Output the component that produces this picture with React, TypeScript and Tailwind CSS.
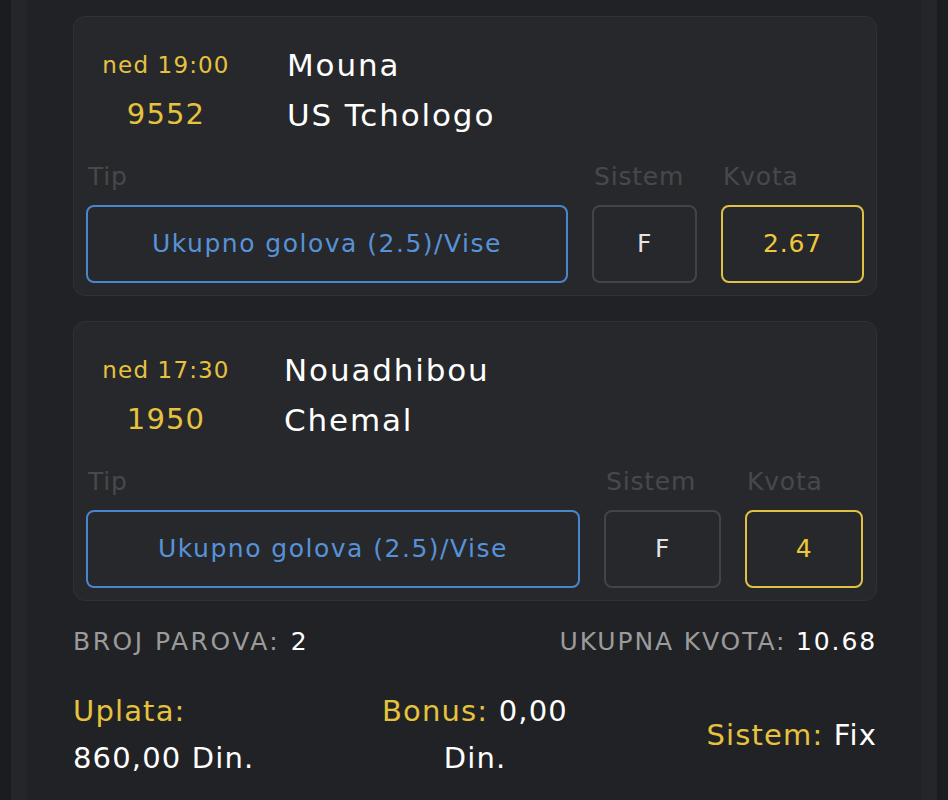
const matches = [
  {
    time: "ned 19:00",
    code: "9552",
    home: "Mouna",
    away: "US Tchologo",
    tip: "Ukupno golova (2.5)/Vise",
    sistem: "F",
    kvota: "2.67",
    cols: "grid-cols-[482px_105px_143px]",
    teamsGap: "ml-[41px]",
  },
  {
    time: "ned 17:30",
    code: "1950",
    home: "Nouadhibou",
    away: "Chemal",
    tip: "Ukupno golova (2.5)/Vise",
    sistem: "F",
    kvota: "4",
    cols: "grid-cols-[494px_117px_118px]",
    teamsGap: "ml-[38px]",
  },
]

function MatchCard({ m }: { m: (typeof matches)[number] }) {
  return (
    <div className="rounded-[12px] border border-[#303134] bg-[#27282b] pb-[12px] pl-[12px] pr-[12px] pt-[23px]">
      <div className="flex">
        <div className="flex w-[160px] flex-col items-center">
          <div className="flex h-[50px] items-center text-[23px] tracking-[0.05em] text-[#e6c23e]">
            {m.time}
          </div>
          <div className="flex h-[50px] items-center text-[29px] tracking-[0.04em] text-[#e6c23e]">
            {m.code}
          </div>
        </div>
        <div className={`${m.teamsGap} flex flex-col text-[31px] tracking-[0.06em] text-white`}>
          <div className="flex h-[50px] items-center">{m.home}</div>
          <div className="flex h-[50px] items-center">{m.away}</div>
        </div>
      </div>

      <div className={`mt-[20px] grid ${m.cols} gap-x-[24px] tracking-[0.05em]`}>
        <div className="h-[34px] pl-[2px] text-[25px] leading-[34px] text-[#47484b]">Tip</div>
        <div className="h-[34px] pl-[2px] text-[25px] leading-[34px] text-[#47484b]">Sistem</div>
        <div className="h-[34px] pl-[2px] text-[25px] leading-[34px] text-[#47484b]">Kvota</div>

        <div className="mt-[11px] flex h-[78px] items-center justify-center rounded-[8px] border-2 border-[#4a86cc] text-[25px] tracking-[0.06em] text-[#5792d8]">
          {m.tip}
        </div>
        <div className="mt-[11px] flex h-[78px] items-center justify-center rounded-[8px] border-2 border-[#434447] text-[25px] text-[#e4e4e4]">
          {m.sistem}
        </div>
        <div className="mt-[11px] flex h-[78px] items-center justify-center rounded-[8px] border-2 border-[#e2c044] text-[25px] text-[#eec83a]">
          {m.kvota}
        </div>
      </div>
    </div>
  )
}

export default function App() {
  return (
    <div
      className="min-h-[800px] bg-[#1b1c1f] px-[11px]"
      style={{ fontFamily: '"DejaVu Sans", "Open Sans", sans-serif' }}
    >
      <div className="min-h-[800px] bg-[#252629] px-[16px]">
        <div className="min-h-[800px] bg-[#212225] pl-[46px] pr-[44px] pt-[16px]">
          <div className="flex flex-col gap-[25px]">
            {matches.map((m) => (
              <MatchCard key={m.code} m={m} />
            ))}
          </div>

          <div className="mt-[24px] flex h-[34px] items-center justify-between text-[25px] tracking-[0.1em] text-[#9b9b9b]">
            <div>
              BROJ PAROVA: <span className="text-white">2</span>
            </div>
            <div className="tracking-[0.075em]">
              UKUPNA KVOTA: <span className="text-white">10.68</span>
            </div>
          </div>

          <div className="mt-[29px] grid grid-cols-[1fr_auto_1fr] items-center text-[29px] leading-[47px] tracking-[0.04em]">
            <div>
              <div className="text-[#e6c23e]">Uplata:</div>
              <div className="text-white">860,00 Din.</div>
            </div>
            <div className="w-[230px] text-center">
              <div>
                <span className="text-[#e6c23e]">Bonus:</span>{" "}
                <span className="text-white">0,00</span>
              </div>
              <div className="text-white">Din.</div>
            </div>
            <div className="justify-self-end">
              <span className="text-[#e6c23e]">Sistem:</span>{" "}
              <span className="text-white">Fix</span>
            </div>
          </div>
        </div>
      </div>
    </div>
  )
}
